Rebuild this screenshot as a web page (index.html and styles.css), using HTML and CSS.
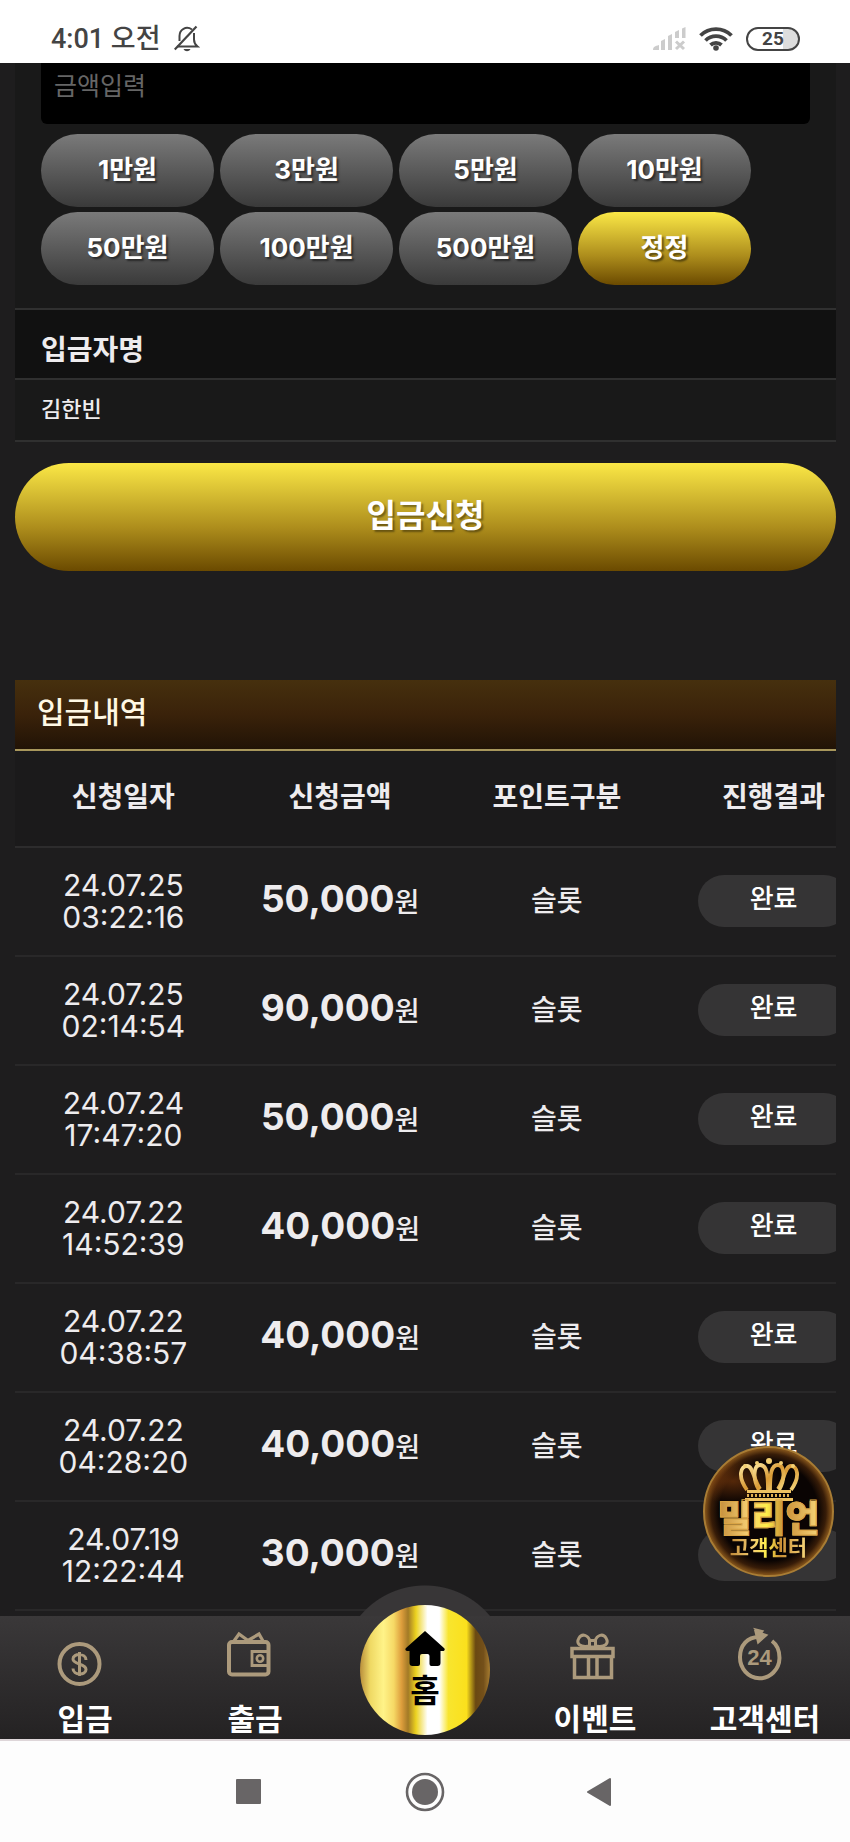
FILE: index.html
```html
<!DOCTYPE html>
<html lang="ko">
<head>
    <meta charset="UTF-8">
    <meta name="viewport" content="width=device-width, initial-scale=1.0">
    <title>입금신청</title>
    <link rel="stylesheet" href="styles.css">
</head>
<body>
    <header class="status-bar">
        <div class="status-left">
            <span>4:01 오전</span>
            <svg class="bell" viewBox="0 0 26 28" fill="none" stroke="#444" stroke-width="2">
                <path d="M18 4.500C12 .500 5.500 4.500 5.500 11v5M3 21.500h20.500c-2.500-2-3.500-4-3.500-7V8"/>
                <path d="M.800 24.500L22.500 1.500" stroke-width="2.200"/>
                <path d="M9.500 24h7c-1.500 3-5.500 3-7 0z" fill="#444" stroke="none"/>
            </svg>
        </div>
        <div class="status-right">
            <svg class="signal" viewBox="0 0 33 24" fill="#ccc">
                <path d="M0 23c0-3 2-4 6-5v5zM8 14l4-2v11H8zM15 9l4-2v16h-4zM22 5l4-2v8h-4zM29 1.500L32.500 0v11H29z"/>
                <path d="M23 14.500l8 7.500M31 14.500L23 22" stroke="#ccc" stroke-width="3"/>
            </svg>
            <svg class="wifi" viewBox="0 0 34 24" fill="none" stroke="#444" stroke-width="3.800">
                <path d="M1.500 8.500a22 22 0 0 1 31 0M6.500 13.500a15 15 0 0 1 21 0M11.500 18a8 8 0 0 1 11 0"/>
                <circle cx="17" cy="21" r="2.800" fill="#444" stroke="none"/>
            </svg>
            <span class="battery">25</span>
        </div>
    </header>

    <main class="content">
        <section class="deposit">
            <div class="amount">
                <input class="amount-input" type="text" placeholder="금액입력" aria-label="금액입력">
                <div class="amount-btns">
                    <button class="btn" type="button">1만원</button>
                    <button class="btn" type="button">3만원</button>
                    <button class="btn" type="button">5만원</button>
                    <button class="btn" type="button">10만원</button>
                    <button class="btn" type="button">50만원</button>
                    <button class="btn" type="button">100만원</button>
                    <button class="btn" type="button">500만원</button>
                    <button class="btn gold" type="button">정정</button>
                </div>
            </div>
            <h2 class="row-title">입금자명</h2>
            <p class="row-value">김한빈</p>
        </section>

        <button class="submit gold" type="button">입금신청</button>

        <section class="history">
            <h2 class="history-title">입금내역</h2>
            <table class="history-table">
                <thead>
                    <tr><th>신청일자</th><th>신청금액</th><th>포인트구분</th><th>진행결과</th></tr>
                </thead>
                <tbody>
                    <tr>
                        <td class="date">24.07.25<br>03:22:16</td>
                        <td><b class="money">50,000</b><span class="won">원</span></td>
                        <td>슬롯</td>
                        <td><span class="state">완료</span></td>
                    </tr>
                    <tr>
                        <td class="date">24.07.25<br>02:14:54</td>
                        <td><b class="money">90,000</b><span class="won">원</span></td>
                        <td>슬롯</td>
                        <td><span class="state">완료</span></td>
                    </tr>
                    <tr>
                        <td class="date">24.07.24<br>17:47:20</td>
                        <td><b class="money">50,000</b><span class="won">원</span></td>
                        <td>슬롯</td>
                        <td><span class="state">완료</span></td>
                    </tr>
                    <tr>
                        <td class="date">24.07.22<br>14:52:39</td>
                        <td><b class="money">40,000</b><span class="won">원</span></td>
                        <td>슬롯</td>
                        <td><span class="state">완료</span></td>
                    </tr>
                    <tr>
                        <td class="date">24.07.22<br>04:38:57</td>
                        <td><b class="money">40,000</b><span class="won">원</span></td>
                        <td>슬롯</td>
                        <td><span class="state">완료</span></td>
                    </tr>
                    <tr>
                        <td class="date">24.07.22<br>04:28:20</td>
                        <td><b class="money">40,000</b><span class="won">원</span></td>
                        <td>슬롯</td>
                        <td><span class="state">완료</span></td>
                    </tr>
                    <tr>
                        <td class="date">24.07.19<br>12:22:44</td>
                        <td><b class="money">30,000</b><span class="won">원</span></td>
                        <td>슬롯</td>
                        <td><span class="state">완료</span></td>
                    </tr>
                </tbody>
            </table>
        </section>

        <a class="support" href="#support">
            <svg class="crown" viewBox="0 0 60 43" fill="none">
                <defs>
                    <linearGradient id="crownGold" x1="0" y1="0" x2="1" y2="1">
                        <stop offset="0" stop-color="#fbe39a"/>
                        <stop offset=".5" stop-color="#d99a35"/>
                        <stop offset="1" stop-color="#f6d57c"/>
                    </linearGradient>
                </defs>
                <g stroke="url(#crownGold)" stroke-width="3.800">
                    <path d="M8 32C-2 18 2 8 8 8c6 0 6 12 13 23M52 32C62 18 58 8 52 8c-6 0-6 12-13 23"/>
                    <path d="M20 32C13 20 15 7 21 7c7 0 8 10 8 25M40 32C47 20 45 7 39 7c-7 0-8 10-8 25"/>
                </g>
                <g fill="#f3cf73">
                    <circle cx="30" cy="3" r="3"/>
                    <circle cx="18" cy="5" r="2"/>
                    <circle cx="42" cy="5" r="2"/>
                    <circle cx="6" cy="8" r="2"/>
                    <circle cx="54" cy="8" r="2"/>
                </g>
                <path d="M8 32h44v3H8zM6 40h48v3H6z" fill="#efc362"/>
                <path d="M8 37.500h44" stroke="#e0b050" stroke-width="3" stroke-dasharray="2 2"/>
            </svg>
            <strong class="support-name">밀리언</strong>
            <span class="support-text">고객센터</span>
        </a>
    </main>

    <nav class="tab-bar">
        <a class="tab" href="#deposit">
            <svg class="tab-icon" viewBox="0 0 60 60" fill="none" stroke="#ac9a7c" stroke-width="4">
                <circle cx="24.500" cy="38" r="20"/>
                <path d="M31 34c0-7-13-7-13-1s13 4 13 10.500-13 6-13-1M24.500 26v24" stroke-width="3"/>
            </svg>
            <span>입금</span>
        </a>
        <a class="tab" href="#withdraw">
            <svg class="tab-icon" viewBox="0 0 60 60" fill="none" stroke="#ac9a7c" stroke-width="4">
                <rect x="4" y="16" width="39.500" height="32.500" rx="3"/>
                <path d="M9 15l5-7 9 6.500M38 15l-4-7-11 6.500" stroke-width="3.200"/>
                <path d="M43 25.500H27v14h16" stroke-width="2.800"/>
                <circle cx="35" cy="32.500" r="3.200" stroke-width="2.600"/>
            </svg>
            <span>출금</span>
        </a>
        <a class="home" href="#home">
            <svg class="home-icon" viewBox="0 0 40 35">
                <path d="M20 0L1 17c-1.500 1.500 0 3 1 3h2.500v12q0 3 3 3H13q2 0 2-2v-8q0-2 2-2h5.500q2 0 2 2v8q0 2 2 2h6q3 0 3-3V20H38c1.500 0 2.500-1.500 1-3z"/>
            </svg>
            <span>홈</span>
        </a>
        <a class="tab" href="#event">
            <svg class="tab-icon" viewBox="0 0 60 60" fill="none" stroke="#ac9a7c" stroke-width="3.500">
                <path d="M7 22.500h41v8H7zM9.500 31v20.500h37V31M23.500 31v20M32 31v20"/>
                <path d="M25 20C14 22 11 17 14 12c3-5 9-3 11 3M30 20c11 2 14-3 11-8-3-5-9-3-11 3M24.500 14.500h6V21h-6z" stroke-width="3"/>
            </svg>
            <span>이벤트</span>
        </a>
        <a class="tab" href="#center">
            <svg class="tab-icon" viewBox="0 0 60 60" fill="none" stroke="#ac9a7c" stroke-width="4">
                <path d="M25 11C12 10.500 5 20 5 31a19.500 20.500 0 0 0 39.500 1c0-7-2-13-7.500-17"/>
                <path d="M20 5l12 4-9 8zM20 3l8 2-3 4z" fill="#ac9a7c" stroke-width="1.500"/>
                <text class="icon-24" x="24.500" y="39" text-anchor="middle">24</text>
            </svg>
            <span>고객센터</span>
        </a>
    </nav>

    <footer class="system-nav">
        <button type="button" aria-label="최근 앱">
            <svg viewBox="0 0 40 40"><rect x="7" y="7" width="25" height="25" rx="1" fill="#686566"/></svg>
        </button>
        <button type="button" aria-label="홈">
            <svg viewBox="0 0 40 40"><circle cx="20" cy="20" r="18" fill="none" stroke="#686566" stroke-width="2.600"/><circle cx="20" cy="20" r="13" fill="#686566"/></svg>
        </button>
        <button type="button" aria-label="뒤로">
            <svg viewBox="0 0 40 40"><path d="M7 20L29 7v26z" fill="#686566" stroke="#686566" stroke-width="2" stroke-linejoin="round"/></svg>
        </button>
    </footer>
</body>
</html>
```

FILE: styles.css
```css
* {
    margin: 0;
    padding: 0;
    box-sizing: border-box;
}

body {
    min-height: 100vh;
    display: flex;
    flex-direction: column;
    background: #1e1d1e;
    color: #eeecee;
    font-family: Inter, "Noto Sans CJK KR", sans-serif;
}

button {
    border: none;
    cursor: pointer;
    font-family: inherit;
}

a {
    color: inherit;
    text-decoration: none;
}

/* status bar */
.status-bar {
    height: 63px;
    padding: 14px 50px 0 51px;
    display: flex;
    justify-content: space-between;
    align-items: center;
    background: #fff;
    color: #444;
    font: 500 27px/36px Roboto, "Noto Sans CJK KR", sans-serif;
}

.status-left,
.status-right {
    display: flex;
    align-items: center;
    gap: 13px;
}

.bell {
    width: 26px;
    height: 28px;
}

.signal {
    width: 33px;
    height: 24px;
}

.wifi {
    width: 34px;
    height: 24px;
}

.battery {
    width: 54px;
    height: 24px;
    border: 2px solid #444;
    border-radius: 12px;
    background: linear-gradient(90deg, #fff 70%, #ddd 70%);
    font-size: 19px;
    font-weight: 700;
    line-height: 20px;
    text-align: center;
}

/* deposit form */
.content {
    flex: 1;
    position: relative;
    padding: 0 14px 0 15px;
}

.deposit {
    background: #191919;
}

.amount {
    padding: 0 26px 23px;
}

.amount-input {
    display: block;
    width: 100%;
    height: 61px;
    padding: 0 13px 20px;
    border: none;
    border-radius: 0 0 6px 6px;
    background: #000;
    color: #eeecee;
    font: 25px "Noto Sans CJK KR", sans-serif;
}

.amount-input::placeholder {
    color: #666;
}

.amount-btns {
    display: flex;
    flex-wrap: wrap;
    gap: 5px 6px;
    margin-top: 10px;
}

.btn {
    width: 173px;
    height: 73px;
    padding-bottom: 6px;
    border-radius: 37px;
    background: linear-gradient(#7a7a7a, #3a3a3a);
    color: #fff;
    font-size: 26px;
    font-weight: 700;
    text-shadow: 2px 2px 2px rgba(0, 0, 0, 0.5);
}

.gold {
    background: linear-gradient(#fbe846, #ad8d1c 60%, #6b4a00);
}

.row-title {
    padding: 20px 26px 8px;
    border: solid #303030;
    border-width: 2px 0;
    background: #111;
    font-size: 28px;
    line-height: 40px;
}

.row-value {
    padding: 13px 26px 14px;
    border-bottom: 2px solid #303030;
    font-size: 22px;
    font-weight: 500;
    line-height: 33px;
}

.submit {
    display: block;
    width: 100%;
    height: 108px;
    margin: 21px 0 109px;
    padding-bottom: 8px;
    border-radius: 54px;
    color: #fff;
    font-size: 32px;
    font-weight: 700;
    text-shadow: 2px 2px 2px rgba(0, 0, 0, 0.4);
}

/* history, the last column runs off the right edge */
.history {
    overflow: hidden;
}

.history-title {
    padding: 10px 22px 15px;
    border-bottom: 2px solid #a8975c;
    background: linear-gradient(#46300e, #3a220a 50%, #211306);
    color: #fff8e4;
    font-size: 30px;
    font-weight: 500;
    line-height: 44px;
}

.history-table {
    width: 867px;
    border-spacing: 0;
    table-layout: fixed;
    text-align: center;
    font-size: 28px;
    font-weight: 500;
    line-height: 32px;
}

.history-table th {
    height: 97px;
    padding-bottom: 4px;
    border-bottom: 2px solid #2d2c2d;
    background: #1b1a1b;
}

.history-table td {
    height: 109px;
    padding-bottom: 2px;
    border-bottom: 2px solid #292829;
}

.date {
    font-size: 30px;
    font-weight: 400;
}

.money {
    font-size: 37px;
}

.won {
    font-size: 27px;
}

.state {
    display: inline-block;
    width: 152px;
    padding: 8px 0 12px;
    border-radius: 26px;
    background: #353435;
    color: #fff;
    font-size: 26px;
    vertical-align: middle;
}

/* floating support badge */
.support {
    position: absolute;
    right: 16px;
    bottom: 39px;
    width: 131px;
    height: 131px;
    padding-top: 10px;
    display: flex;
    flex-direction: column;
    align-items: center;
    border: 2px solid #a87c34;
    border-radius: 50%;
    background:
        radial-gradient(ellipse 48px 22px at 22% 26%, rgba(116, 55, 12, 0.7), transparent),
        radial-gradient(circle, #0a0403 55%, #371c08 64%, #7b4d18 70%);
}

.crown {
    width: 60px;
    height: 43px;
}

.support-name,
.support-text {
    background: linear-gradient(90deg, #c18a38, #f5cd72 30%, #fff04a 48%, #c98e35 65%, #f7d67b);
    -webkit-background-clip: text;
    background-clip: text;
    color: transparent;
    white-space: nowrap;
}

.support-name {
    font-size: 37px;
    font-weight: 900;
    line-height: 36px;
    -webkit-text-stroke: 1px #d9a445;
}

.support-text {
    font-size: 21px;
    font-weight: 700;
    line-height: 22px;
}

/* tab bar */
.tab-bar {
    position: relative;
    height: 125px;
    display: grid;
    grid-template-columns: repeat(5, 1fr);
    justify-items: center;
    border-bottom: 2px solid #ded6d9;
    background: linear-gradient(#3a3839, #242223);
    color: #fff;
    font-size: 30px;
    font-weight: 700;
    line-height: 36px;
}

/* bump behind the home button */
.tab-bar::before {
    content: "";
    position: absolute;
    left: 0;
    right: 0;
    top: -31px;
    height: 31px;
    background: radial-gradient(circle at 50% 85px, #383637 84px, transparent 85px);
}

.tab {
    padding-top: 10px;
    display: flex;
    flex-direction: column;
    align-items: center;
    gap: 15px;
}

.tab-icon {
    width: 60px;
    height: 60px;
}

.icon-24 {
    fill: #ac9a7c;
    stroke: none;
    font: 700 22px "Liberation Sans", sans-serif;
}

.home {
    position: relative;
    width: 130px;
    height: 130px;
    margin-top: -11px;
    padding-top: 26px;
    display: flex;
    flex-direction: column;
    align-items: center;
    gap: 7px;
    border-radius: 50%;
    background: linear-gradient(90deg, #b98f3c, #efd964 8%, #fff388 18%, #f6d965 26%, #dd9d3c 32%, #a37a26 37%, #ecd21f 43%, #fff 52%, #fff 61%, #f8e52e 68%, #fbe01c 82%, #6a4812 89%, #74501a 95%, #a67c30);
    color: #000;
    font-size: 32px;
}

.home-icon {
    width: 40px;
    height: 35px;
}

/* android buttons */
.system-nav {
    height: 101px;
    display: flex;
    justify-content: center;
    align-items: center;
    gap: 136px;
    background: #fdfdfd;
}

.system-nav button {
    width: 40px;
    height: 40px;
    background: none;
}
```
